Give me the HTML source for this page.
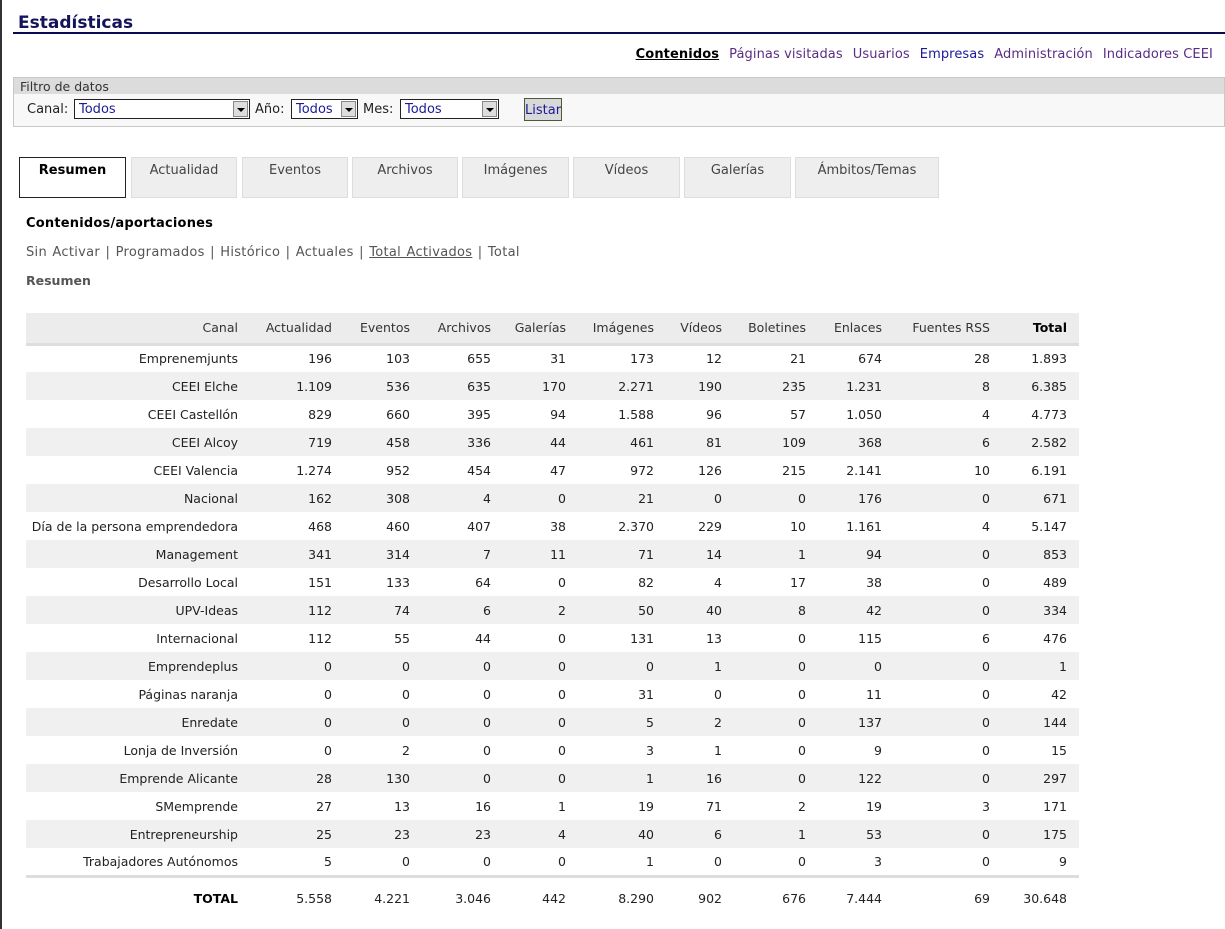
<!DOCTYPE html>
<html><head><meta charset="utf-8"><style>
*{margin:0;padding:0;box-sizing:border-box}
body{width:1225px;height:929px;background:#fff;font-family:"DejaVu Sans","Liberation Sans",sans-serif;font-size:12.5px;color:#222;position:relative;overflow:hidden}
.abs{position:absolute}
.lb{left:0;top:0;width:2px;height:929px;background:#333}
h1{position:absolute;left:18px;top:13px;font-size:17px;font-weight:bold;color:#14145a}
.rule{left:13px;top:32px;width:1212px;height:2px;background:#0a0a50}
.nav{right:12px;top:47px;font-size:13px;color:#5a2d82;white-space:nowrap;letter-spacing:0.1px}
.nav span{margin-left:10px}
.nav b{color:#000;text-decoration:underline}
.filter{left:13px;top:77px;width:1212px;height:50px;border:1px solid #c8c8c8;background:#f8f8f8}
.fh{height:16px;background:#dcdcdc;padding-left:6px;font-size:12.5px;line-height:18px;color:#333}
.sel{position:absolute;top:99px;height:20px;border:1px solid #222;background:#fff;color:#1a1a9a;font-size:13px;line-height:20px;padding-left:4px}
.sel i{position:absolute;right:1px;top:1px;width:15px;height:16px;background:#ddd;border:1px solid #888}
.sel i:after{content:"";position:absolute;left:3px;top:6px;border-left:4px solid transparent;border-right:4px solid transparent;border-top:4px solid #000}
.lbl{position:absolute;top:102px;font-size:13px;color:#222}
.btn{left:524px;top:98px;width:38px;height:23px;background:#d8d8d8;border:1px solid #4a5a3a;color:#1a1a9a;font-size:13px;line-height:24px;text-align:center}
.tab{position:absolute;top:157px;height:41px;background:#eee;border:1px solid #ddd;text-align:center;font-size:13px;color:#444;padding-top:5px}
.tab.on{background:#fff;border:1px solid #222;color:#000;font-weight:bold}
table{position:absolute;left:26px;top:313px;width:1053px;border-collapse:collapse;table-layout:fixed;font-size:12.5px}
td,th{text-align:right;padding-right:12px;height:28px;font-weight:normal;white-space:nowrap}
th{background:#ececec;border-bottom:3px solid #ddd;height:31px;color:#333}
tr.g td{background:#f0f0f0}
tr.tot td{border-top:3px solid #ddd;height:44px;padding-top:0}
</style></head><body>
<div class="abs lb"></div>
<h1>Estadísticas</h1>
<div class="abs rule"></div>
<div class="abs nav"><b>Contenidos</b><span>Páginas visitadas</span><span>Usuarios</span><span style="color:#1a1a9a">Empresas</span><span>Administración</span><span>Indicadores CEEI</span></div>
<div class="abs filter"><div class="fh">Filtro de datos</div></div>
<div class="lbl" style="left:27px">Canal:</div>
<div class="sel" style="left:74px;width:176px">Todos<i></i></div>
<div class="lbl" style="left:255px">Año:</div>
<div class="sel" style="left:291px;width:67px">Todos<i></i></div>
<div class="lbl" style="left:363px">Mes:</div>
<div class="sel" style="left:400px;width:99px">Todos<i></i></div>
<div class="abs btn">Listar</div>
<div class="tab on" style="left:19px;width:107px">Resumen</div>
<div class="tab" style="left:131px;width:106px">Actualidad</div>
<div class="tab" style="left:242px;width:106px">Eventos</div>
<div class="tab" style="left:352px;width:106px">Archivos</div>
<div class="tab" style="left:462px;width:107px">Imágenes</div>
<div class="tab" style="left:573px;width:107px">Vídeos</div>
<div class="tab" style="left:684px;width:107px">Galerías</div>
<div class="tab" style="left:795px;width:144px">Ámbitos/Temas</div>
<div class="abs" style="left:26px;top:216px;font-weight:bold;font-size:13px;color:#000;letter-spacing:0.2px">Contenidos/aportaciones</div>
<div class="abs" style="left:26px;top:245px;font-size:13px;color:#555;white-space:nowrap;word-spacing:1px;letter-spacing:0.3px">Sin Activar | Programados | Histórico | Actuales | <u>Total Activados</u> | Total</div>
<div class="abs" style="left:26px;top:273px;font-weight:bold;font-size:12.5px;color:#555">Resumen</div>
<table>
<colgroup><col style="width:224px"><col style="width:94px"><col style="width:78px"><col style="width:81px"><col style="width:75px"><col style="width:88px"><col style="width:68px"><col style="width:84px"><col style="width:76px"><col style="width:108px"><col style="width:77px"></colgroup>
<tr><th>Canal</th><th>Actualidad</th><th>Eventos</th><th>Archivos</th><th>Galerías</th><th>Imágenes</th><th>Vídeos</th><th>Boletines</th><th>Enlaces</th><th>Fuentes RSS</th><th style="font-weight:bold;color:#000">Total</th></tr>
<tr><td>Emprenemjunts</td><td>196</td><td>103</td><td>655</td><td>31</td><td>173</td><td>12</td><td>21</td><td>674</td><td>28</td><td>1.893</td></tr>
<tr class="g"><td>CEEI Elche</td><td>1.109</td><td>536</td><td>635</td><td>170</td><td>2.271</td><td>190</td><td>235</td><td>1.231</td><td>8</td><td>6.385</td></tr>
<tr><td>CEEI Castellón</td><td>829</td><td>660</td><td>395</td><td>94</td><td>1.588</td><td>96</td><td>57</td><td>1.050</td><td>4</td><td>4.773</td></tr>
<tr class="g"><td>CEEI Alcoy</td><td>719</td><td>458</td><td>336</td><td>44</td><td>461</td><td>81</td><td>109</td><td>368</td><td>6</td><td>2.582</td></tr>
<tr><td>CEEI Valencia</td><td>1.274</td><td>952</td><td>454</td><td>47</td><td>972</td><td>126</td><td>215</td><td>2.141</td><td>10</td><td>6.191</td></tr>
<tr class="g"><td>Nacional</td><td>162</td><td>308</td><td>4</td><td>0</td><td>21</td><td>0</td><td>0</td><td>176</td><td>0</td><td>671</td></tr>
<tr><td>Día de la persona emprendedora</td><td>468</td><td>460</td><td>407</td><td>38</td><td>2.370</td><td>229</td><td>10</td><td>1.161</td><td>4</td><td>5.147</td></tr>
<tr class="g"><td>Management</td><td>341</td><td>314</td><td>7</td><td>11</td><td>71</td><td>14</td><td>1</td><td>94</td><td>0</td><td>853</td></tr>
<tr><td>Desarrollo Local</td><td>151</td><td>133</td><td>64</td><td>0</td><td>82</td><td>4</td><td>17</td><td>38</td><td>0</td><td>489</td></tr>
<tr class="g"><td>UPV-Ideas</td><td>112</td><td>74</td><td>6</td><td>2</td><td>50</td><td>40</td><td>8</td><td>42</td><td>0</td><td>334</td></tr>
<tr><td>Internacional</td><td>112</td><td>55</td><td>44</td><td>0</td><td>131</td><td>13</td><td>0</td><td>115</td><td>6</td><td>476</td></tr>
<tr class="g"><td>Emprendeplus</td><td>0</td><td>0</td><td>0</td><td>0</td><td>0</td><td>1</td><td>0</td><td>0</td><td>0</td><td>1</td></tr>
<tr><td>Páginas naranja</td><td>0</td><td>0</td><td>0</td><td>0</td><td>31</td><td>0</td><td>0</td><td>11</td><td>0</td><td>42</td></tr>
<tr class="g"><td>Enredate</td><td>0</td><td>0</td><td>0</td><td>0</td><td>5</td><td>2</td><td>0</td><td>137</td><td>0</td><td>144</td></tr>
<tr><td>Lonja de Inversión</td><td>0</td><td>2</td><td>0</td><td>0</td><td>3</td><td>1</td><td>0</td><td>9</td><td>0</td><td>15</td></tr>
<tr class="g"><td>Emprende Alicante</td><td>28</td><td>130</td><td>0</td><td>0</td><td>1</td><td>16</td><td>0</td><td>122</td><td>0</td><td>297</td></tr>
<tr><td>SMemprende</td><td>27</td><td>13</td><td>16</td><td>1</td><td>19</td><td>71</td><td>2</td><td>19</td><td>3</td><td>171</td></tr>
<tr class="g"><td>Entrepreneurship</td><td>25</td><td>23</td><td>23</td><td>4</td><td>40</td><td>6</td><td>1</td><td>53</td><td>0</td><td>175</td></tr>
<tr><td>Trabajadores Autónomos</td><td>5</td><td>0</td><td>0</td><td>0</td><td>1</td><td>0</td><td>0</td><td>3</td><td>0</td><td>9</td></tr>
<tr class="tot"><td style="font-weight:bold;color:#000">TOTAL</td><td>5.558</td><td>4.221</td><td>3.046</td><td>442</td><td>8.290</td><td>902</td><td>676</td><td>7.444</td><td>69</td><td>30.648</td></tr>
</table>
</body></html>
